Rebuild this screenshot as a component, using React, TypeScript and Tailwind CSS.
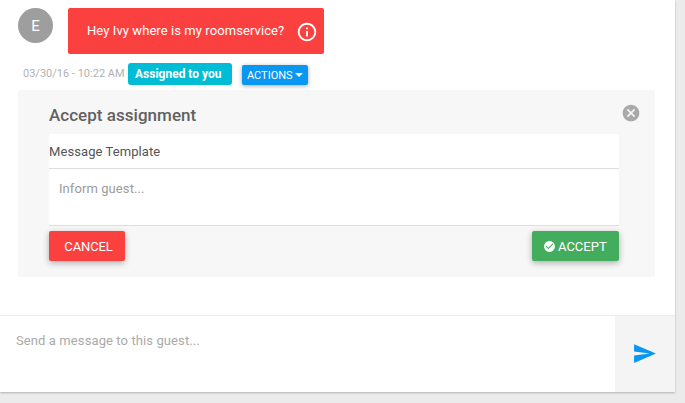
import { MdCancel, MdCheckCircle, MdInfoOutline, MdSend } from "react-icons/md";

function Message() {
  return (
    <div className="flex h-[46px] items-start gap-[15px]">
      <div className="flex size-[35px] shrink-0 items-center justify-center rounded-full bg-[#9e9e9e] pt-px text-[15px] text-white">
        E
      </div>
      <div className="flex h-[46px] w-[256px] items-center rounded-[2px] bg-[#fb413f] pl-[19px] text-[13px] tracking-[0.08px] text-white">
        <span className="w-[209px] whitespace-nowrap leading-[18px]">Hey Ivy where is my roomservice?</span>
        <MdInfoOutline className="mt-[2px] size-[22px] shrink-0" />
      </div>
    </div>
  );
}

function Meta() {
  return (
    <div className="flex h-9 items-start pt-[9px]">
      <time className="ml-[5px] mt-[3px] w-[105px] whitespace-nowrap text-[11px] leading-4 text-[#b2b2b2]">
        03/30/16 - 10:22 AM
      </time>
      <span className="h-[22px] w-[104px] whitespace-nowrap rounded-[3px] bg-[#00bcd4] pl-[7px] text-[12px] font-bold leading-[22px] text-white">
        Assigned to you
      </span>
      <button className="ml-[10px] mt-[2px] flex h-5 w-[66px] items-center rounded-[2px] bg-[#0997f1] pl-[5px] text-left text-[11px] leading-5 text-white shadow-[0_1px_4px_rgba(0,0,0,0.35)]">
        <span className="mt-px w-[48px]">ACTIONS</span>
        <svg viewBox="0 0 8 4" className="h-1 w-2 shrink-0 fill-current">
          <path d="M0 0h8L4 4z" />
        </svg>
      </button>
    </div>
  );
}

function AssignmentPanel() {
  return (
    <section className="h-[187px] rounded-[2px] bg-[#f7f7f7] pl-[31px] pr-9">
      <header className="flex h-11 items-start justify-between pt-[14px]">
        <h2 className="text-[17px] font-medium leading-[22px] tracking-[0.03px] text-[#616161]">Accept assignment</h2>
        <MdCancel className="-mr-[22.4px] -mt-[0.7px] size-5 text-[#a9a9a9]" />
      </header>
      <div className="h-[35px] border-b border-[#dedede] bg-white text-[13px] leading-[35px] tracking-[0.08px] text-[#555]">
        Message Template
      </div>
      <div className="h-[57px] border-b border-[#dedede] bg-white pl-[10px] pt-[10px] text-[13px] leading-5 tracking-[0.08px] text-[#9b9b9b]">
        Inform guest...
      </div>
      <div className="mt-[5px] flex justify-between text-[13px] text-white">
        <button className="h-[30px] w-[76px] rounded-[2px] bg-[#fb413f] pl-[3px] pt-[2px] tracking-[-0.1px] shadow-[0_2px_6px_rgba(0,0,0,0.3)]">
          CANCEL
        </button>
        <button className="flex h-[30px] w-[87px] items-center rounded-[2px] bg-[#43ad5d] pl-[11px] shadow-[0_2px_6px_rgba(0,0,0,0.3)]">
          <MdCheckCircle className="mr-[2px] size-[13px] shrink-0" />
          <span className="pt-[2px]">ACCEPT</span>
        </button>
      </div>
    </section>
  );
}

export default function App() {
  return (
    <div className="h-[403px] w-[685px] overflow-hidden bg-[#ebebeb] font-['Roboto',sans-serif]">
      <main className="flex h-[392px] w-[675px] flex-col bg-white shadow-[0_1px_2px_rgba(0,0,0,0.25)]">
        <div className="h-[315px] pl-[18px] pr-5 pt-2">
          <Message />
          <Meta />
          <AssignmentPanel />
        </div>
        <footer className="flex h-[77px] border-t border-[#ececec]">
          <div className="flex-1 pl-4 pt-[15px] text-[13px] leading-5 tracking-[0.1px] text-[#aaa]">
            Send a message to this guest...
          </div>
          <button className="flex w-[60px] items-center justify-center bg-[#f4f4f4] pb-px pr-px">
            <MdSend className="size-[25px] text-[#0997f1]" />
          </button>
        </footer>
      </main>
    </div>
  );
}
